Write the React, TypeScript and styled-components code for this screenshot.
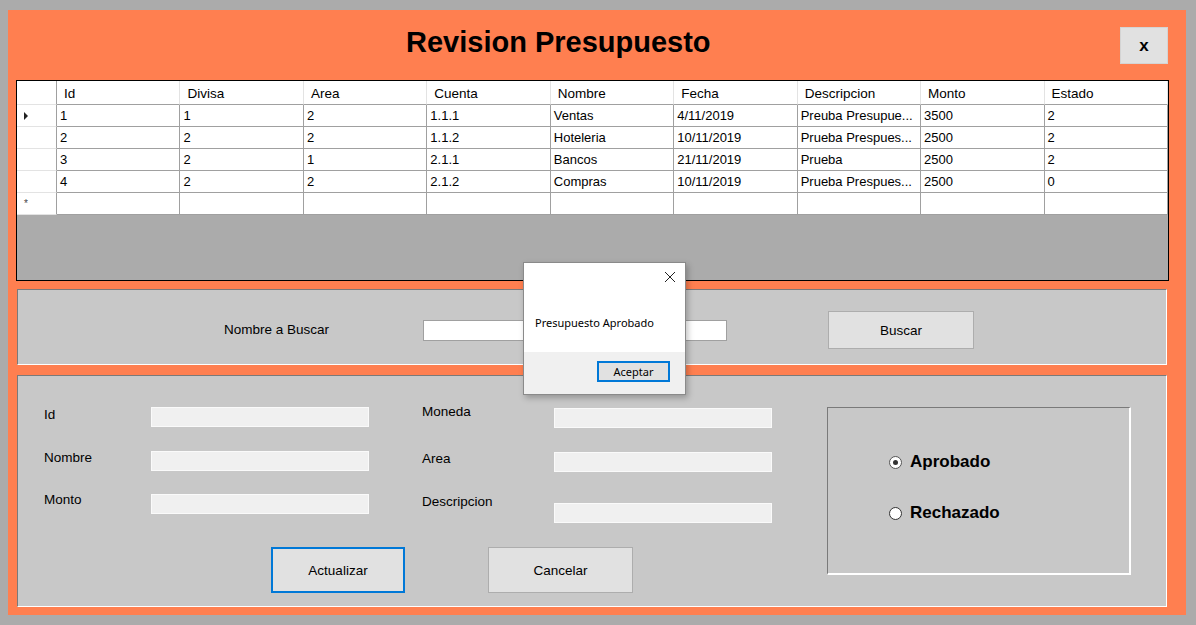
import styled, { createGlobalStyle } from "styled-components";

const GlobalStyle = createGlobalStyle`
  body {
    margin: 0;
    background: #ababab;
    font-family: "Liberation Sans", Arial, sans-serif;
    color: #000;
  }
`;

const Page = styled.div`
  padding: 10px 0 0 8px;
  width: 1196px;
  height: 625px;
  box-sizing: border-box;
  position: relative;
`;

const Window = styled.main`
  width: 1178px;
  height: 605px;
  background: #ff7f50;
  display: flex;
  flex-direction: column;
`;

const Header = styled.header`
  height: 70px;
  display: flex;
  align-items: flex-start;
  padding-top: 14px;
  box-sizing: border-box;
`;

const Title = styled.h1`
  margin: 0 0 0 398px;
  font-size: 29px;
  line-height: 36px;
  font-weight: bold;
`;

const CloseButton = styled.button`
  margin: 3px 18px 0 auto;
  width: 48px;
  height: 37px;
  background: #e1e1e1;
  border: 1px solid #d4d4d4;
  font-family: "Liberation Sans", Arial, sans-serif;
  font-size: 17px;
  font-weight: bold;
  padding: 0;
`;

const Grid = styled.section`
  margin-left: 8px;
  width: 1153px;
  height: 201px;
  box-sizing: border-box;
  border: 1px solid #000;
  background: #ababab;
  display: flex;
  flex-direction: column;
`;

const Row = styled.div<{ $head?: boolean }>`
  display: grid;
  grid-template-columns: 40px repeat(9, 1fr);
  height: ${(p) => (p.$head ? 24 : 22)}px;
  background: #fff;
  font-size: 13px;
`;

const RowHead = styled.div`
  border-right: 1px solid #a0a0a0;
  border-bottom: 1px solid #e3e3e3;
  display: flex;
  align-items: center;
  padding-left: 7px;
  font-size: 10px;
  color: #444;
`;

const HeadCell = styled.div`
  border-right: 1px solid #e3e3e3;
  border-bottom: 1px solid #a0a0a0;
  display: flex;
  align-items: center;
  padding: 1px 0 0 7px;
  font-size: 13.5px;
  white-space: nowrap;
  overflow: hidden;
`;

const Cell = styled.div`
  border-right: 1px solid #a0a0a0;
  border-bottom: 1px solid #a0a0a0;
  display: flex;
  align-items: center;
  padding-left: 3px;
  white-space: nowrap;
  overflow: hidden;
`;

const Pointer = styled.span`
  width: 0;
  height: 0;
  border-top: 4px solid transparent;
  border-bottom: 4px solid transparent;
  border-left: 4px solid #222;
`;

const Panel = styled.section<{ $h: number; $gap: number }>`
  margin: ${(p) => p.$gap}px 0 0 9px;
  width: 1150px;
  height: ${(p) => p.$h}px;
  box-sizing: border-box;
  background: #c8c8c8;
  border-top: 1px solid #7a7a7a;
  border-left: 1px solid #7a7a7a;
  border-bottom: 1px solid #fff;
  border-right: 1px solid #fff;
`;

const SearchBar = styled.div`
  display: flex;
  align-items: center;
  height: 100%;
  padding: 6px 0 0 206px;
  box-sizing: border-box;
`;

const Label = styled.span`
  font-size: 13.5px;
  line-height: 16px;
  white-space: nowrap;
`;

const SearchInput = styled.div`
  margin-left: 94px;
  width: 304px;
  height: 21px;
  box-sizing: border-box;
  background: #fff;
  border: 1px solid #a0a0a0;
`;

const Button = styled.button<{ $w: number; $h: number; $focus?: boolean }>`
  width: ${(p) => p.$w}px;
  height: ${(p) => p.$h}px;
  background: #e1e1e1;
  border: ${(p) => (p.$focus ? "2px solid #0078d7" : "1px solid #adadad")};
  font-family: "Liberation Sans", Arial, sans-serif;
  font-size: 13.5px;
  color: #000;
  padding: 0;
`;

const SearchButton = styled(Button)`
  margin-left: 101px;
`;

const Detail = styled.div`
  display: flex;
  align-items: flex-start;
`;

const FormArea = styled.div`
  padding: 28px 0 0 26px;
  display: flex;
  flex-direction: column;
`;

const Columns = styled.div`
  display: flex;
  align-items: flex-start;
`;

const FieldColumn = styled.div<{ $offset: number; $labelW: number; $gap: number }>`
  padding-top: ${(p) => p.$offset}px;
  margin-left: ${(p) => p.$gap}px;
  display: flex;
  flex-direction: column;
  --label-w: ${(p) => p.$labelW}px;
`;

const Field = styled.div<{ $top: number }>`
  display: flex;
  align-items: flex-start;
  margin-top: ${(p) => p.$top}px;
`;

const FieldLabel = styled(Label)`
  width: var(--label-w);
`;

const TextBox = styled.div<{ $drop: number }>`
  margin-top: ${(p) => p.$drop}px;
  width: 218px;
  height: 20px;
  box-sizing: border-box;
  background: #f0f0f0;
  border: 1px solid #fafafa;
`;

const Actions = styled.div`
  display: flex;
  margin: 24px 0 0 227px;
  gap: 83px;
`;

const GroupBox = styled.div`
  margin: 31px 0 0 55px;
  width: 304px;
  height: 168px;
  box-sizing: border-box;
  border-top: 1px solid #7a7a7a;
  border-left: 1px solid #7a7a7a;
  border-bottom: 2px solid #fff;
  border-right: 2px solid #fff;
  padding: 44px 0 0 61px;
  display: flex;
  flex-direction: column;
  gap: 31px;
`;

const Radio = styled.label`
  display: flex;
  align-items: center;
  height: 20px;
  gap: 8px;
  font-size: 17px;
  font-weight: bold;
`;

const RadioDot = styled.span<{ $checked?: boolean }>`
  width: 13px;
  height: 13px;
  box-sizing: border-box;
  border-radius: 50%;
  background: #fff;
  border: 1px solid ${(p) => (p.$checked ? "#555" : "#333")};
  display: flex;
  align-items: center;
  justify-content: center;
  &::after {
    content: "";
    display: ${(p) => (p.$checked ? "block" : "none")};
    width: 5px;
    height: 5px;
    border-radius: 50%;
    background: #333;
  }
`;

const Dialog = styled.div`
  position: absolute;
  left: 523px;
  top: 262px;
  width: 163px;
  height: 133px;
  box-sizing: border-box;
  border: 1px solid #8a8a8a;
  background: #fff;
  box-shadow: 2px 3px 6px rgba(0, 0, 0, 0.25);
  display: flex;
  flex-direction: column;
  font-family: "Noto Sans", "Open Sans", sans-serif;
`;

const DialogTop = styled.div`
  height: 20px;
  display: flex;
  justify-content: flex-end;
  padding: 8px 9px 0 0;
`;

const DialogText = styled.div`
  flex: 1;
  padding: 24px 0 0 11px;
  font-size: 11px;
  color: #000;
`;

const DialogFooter = styled.div`
  height: 42px;
  background: #f0f0f0;
  display: flex;
  justify-content: flex-end;
  align-items: flex-start;
  padding: 9px 15px 0 0;
  box-sizing: border-box;
`;

const DialogButton = styled.button`
  width: 73px;
  height: 21px;
  background: #e1e1e1;
  border: 2px solid #0078d7;
  font-family: "Noto Sans", "Open Sans", sans-serif;
  font-size: 11px;
  padding: 0;
`;

const columns = ["Id", "Divisa", "Area", "Cuenta", "Nombre", "Fecha", "Descripcion", "Monto", "Estado"];

const rows = [
  ["1", "1", "2", "1.1.1", "Ventas", "4/11/2019", "Preuba Presupue...", "3500", "2"],
  ["2", "2", "2", "1.1.2", "Hoteleria", "10/11/2019", "Prueba Prespues...", "2500", "2"],
  ["3", "2", "1", "2.1.1", "Bancos", "21/11/2019", "Prueba", "2500", "2"],
  ["4", "2", "2", "2.1.2", "Compras", "10/11/2019", "Prueba Prespues...", "2500", "0"],
];

const leftFields = [
  { label: "Id", top: 0, drop: 0 },
  { label: "Nombre", top: 23, drop: 1 },
  { label: "Monto", top: 21, drop: 2 },
];

const rightFields = [
  { label: "Moneda", top: 0, drop: 4 },
  { label: "Area", top: 23, drop: 1 },
  { label: "Descripcion", top: 22, drop: 9 },
];

export default function App() {
  return (
    <Page>
      <GlobalStyle />
      <Window>
        <Header>
          <Title>Revision Presupuesto</Title>
          <CloseButton>x</CloseButton>
        </Header>

        <Grid>
          <Row $head>
            <RowHead />
            {columns.map((c) => (
              <HeadCell key={c}>{c}</HeadCell>
            ))}
          </Row>
          {rows.map((r, i) => (
            <Row key={i}>
              <RowHead>{i === 0 && <Pointer />}</RowHead>
              {r.map((v, j) => (
                <Cell key={j}>{v}</Cell>
              ))}
            </Row>
          ))}
          <Row>
            <RowHead>*</RowHead>
            {columns.map((c) => (
              <Cell key={c} />
            ))}
          </Row>
        </Grid>

        <Panel $h={76} $gap={8}>
          <SearchBar>
            <Label>Nombre a Buscar</Label>
            <SearchInput />
            <SearchButton $w={146} $h={38}>Buscar</SearchButton>
          </SearchBar>
        </Panel>

        <Panel $h={232} $gap={10}>
          <Detail>
            <FormArea>
              <Columns>
                <FieldColumn $offset={3} $labelW={107} $gap={0}>
                  {leftFields.map((f) => (
                    <Field key={f.label} $top={f.top}>
                      <FieldLabel>{f.label}</FieldLabel>
                      <TextBox $drop={f.drop} />
                    </Field>
                  ))}
                </FieldColumn>
                <FieldColumn $offset={0} $labelW={132} $gap={53}>
                  {rightFields.map((f) => (
                    <Field key={f.label} $top={f.top}>
                      <FieldLabel>{f.label}</FieldLabel>
                      <TextBox $drop={f.drop} />
                    </Field>
                  ))}
                </FieldColumn>
              </Columns>
              <Actions>
                <Button $w={134} $h={46} $focus>
                  Actualizar
                </Button>
                <Button $w={145} $h={46}>
                  Cancelar
                </Button>
              </Actions>
            </FormArea>
            <GroupBox>
              <Radio>
                <RadioDot $checked />
                Aprobado
              </Radio>
              <Radio>
                <RadioDot />
                Rechazado
              </Radio>
            </GroupBox>
          </Detail>
        </Panel>
      </Window>

      <Dialog>
        <DialogTop>
          <svg width="12" height="12" viewBox="0 0 12 12">
            <path d="M1 1 L11 11 M11 1 L1 11" stroke="#222" strokeWidth="1" fill="none" />
          </svg>
        </DialogTop>
        <DialogText>Presupuesto Aprobado</DialogText>
        <DialogFooter>
          <DialogButton>Aceptar</DialogButton>
        </DialogFooter>
      </Dialog>
    </Page>
  );
}
